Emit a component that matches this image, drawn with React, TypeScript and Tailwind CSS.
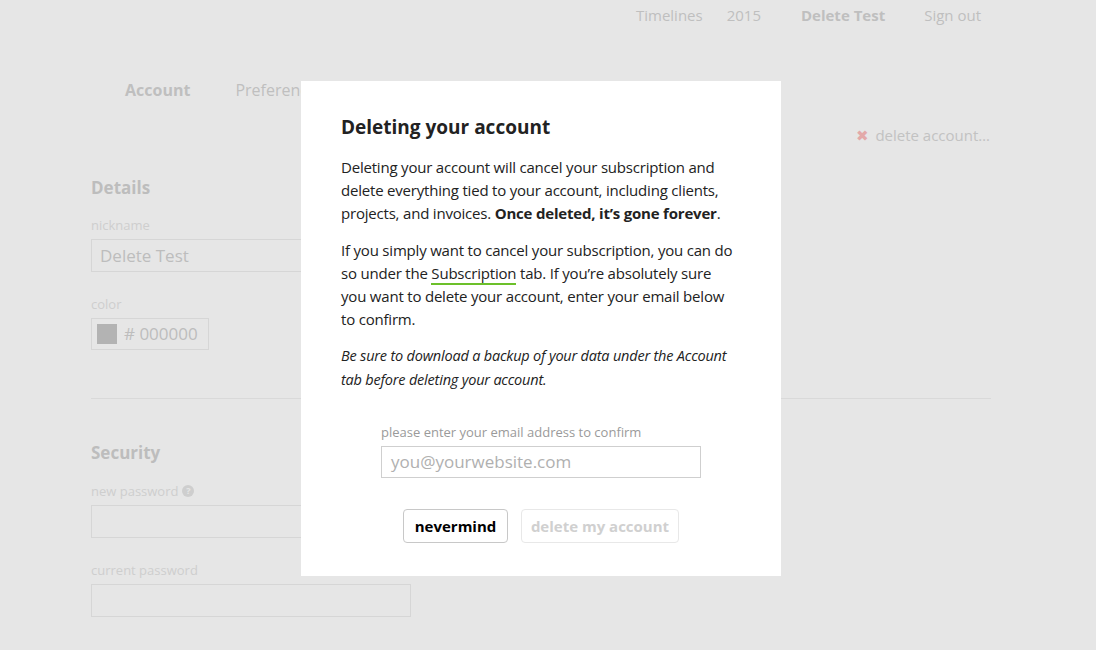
import React from "react";

const font = { fontFamily: '"Open Sans", "Noto Sans", sans-serif' };

function Field({ label, children }: { label: React.ReactNode; children?: React.ReactNode }) {
  return (
    <div className="mt-[23px]">
      <div className="text-[13px] leading-[18px] text-[#cecece]">{label}</div>
      <div className="mt-[5px] flex h-[33px] w-[320px] items-center border border-[#d6d6d6] px-[8px] text-[17px] text-[#bdbdbd]">
        {children}
      </div>
    </div>
  );
}

export default function App() {
  return (
    <div className="relative h-[650px] w-[1096px] overflow-hidden bg-[#e6e6e6]" style={font}>
      {/* top nav */}
      <nav className="flex h-[31px] items-center justify-end pr-[115px] text-[15px] text-[#bfbfbf]">
        <span>Timelines</span>
        <span className="ml-[24px]">2015</span>
        <span className="ml-[40px] font-bold">Delete Test</span>
        <span className="ml-[39px]">Sign out</span>
      </nav>

      <div className="ml-[91px] w-[900px]">
        {/* tabs */}
        <div className="mt-[47px] flex pl-[34px] text-[16px] text-[#bfbfbf]">
          <span className="font-bold">Account</span>
          <span className="ml-[45px]">Preferences</span>
        </div>

        <div className="mt-[22px] flex justify-end pr-[1px] text-[15px] text-[#c2c2c2]">
          <span className="mr-[6px] text-[#e3a9a9]">✖</span>delete account…
        </div>

        <h2 className="mt-[28px] text-[17px] font-bold text-[#bdbdbd]">Details</h2>
        <div className="mt-[16px]">
          <div className="text-[13px] leading-[18px] text-[#cecece]">nickname</div>
          <div className="mt-[5px] flex h-[33px] w-[320px] items-center border border-[#d6d6d6] px-[8px] text-[17px] text-[#bdbdbd]">
            Delete Test
          </div>
        </div>
        <div className="mt-[23px]">
          <div className="text-[13px] leading-[18px] text-[#cecece]">color</div>
          <div className="mt-[5px] flex h-[32px] w-[118px] items-center gap-[7px] border border-[#d6d6d6] px-[5px] text-[17px] text-[#bdbdbd]">
            <span className="h-[20px] w-[20px] bg-[#b3b3b3]" />
            <span># 000000</span>
          </div>
        </div>

        <div className="mt-[48px] h-px bg-[#d9d9d9]" />

        <h2 className="mt-[41px] text-[17px] font-bold text-[#bdbdbd]">Security</h2>
        <div className="mt-[16px]">
          <div className="flex items-center gap-[4px] text-[13px] leading-[18px] text-[#cecece]">
            new password
            <span className="inline-flex h-[12px] w-[12px] items-center justify-center rounded-full bg-[#cecece] text-[9px] font-bold text-[#e6e6e6]">
              ?
            </span>
          </div>
          <div className="mt-[5px] h-[33px] w-[320px] border border-[#d6d6d6]" />
        </div>
        <Field label="current password" />
      </div>

      {/* modal */}
      <div className="absolute left-[301px] top-[81px] h-[495px] w-[480px] bg-white px-[40px] pt-[34px] text-[#222]">
        <h1 className="text-[19px] font-bold leading-[24px] text-[#222]">Deleting your account</h1>
        <p className="mt-[17px] text-[15px] leading-[23px] tracking-[-0.2px]">
          Deleting your account will cancel your subscription and delete everything tied to your account, including
          clients, projects, and invoices. <b>Once deleted, it’s gone forever</b>.
        </p>
        <p className="mt-[14px] text-[15px] leading-[23px] tracking-[-0.2px]">
          If you simply want to cancel your subscription, you can do
          <br />
          so under the <span className="border-b-2 border-[#6cc02a]">Subscription</span> tab. If you’re absolutely sure
          <br />
          you want to delete your account, enter your email below
          <br />
          to confirm.
        </p>
        <p className="mt-[13px] text-[14.5px] italic leading-[24px] tracking-[-0.2px]">
          Be sure to download a backup of your data under the Account tab before deleting your account.
        </p>

        <div className="mt-[31px] pl-[40px]">
          <div className="text-[13px] leading-[18px] text-[#9a9a9a]">please enter your email address to confirm</div>
          <div className="mt-[5px] flex h-[32px] w-[320px] items-center border border-[#cfcfcf] px-[9px] text-[17px] text-[#b0b0b0]">
            you@yourwebsite.com
          </div>
        </div>

        <div className="mt-[31px] flex justify-center gap-[13px]">
          <button className="h-[34px] w-[105px] rounded-[4px] border border-[#c8c8c8] text-[15px] font-bold text-black">
            nevermind
          </button>
          <button className="h-[34px] w-[158px] rounded-[4px] border border-[#e8e8e8] text-[15px] font-bold text-[#d0d0d0]">
            delete my account
          </button>
        </div>
      </div>
    </div>
  );
}
